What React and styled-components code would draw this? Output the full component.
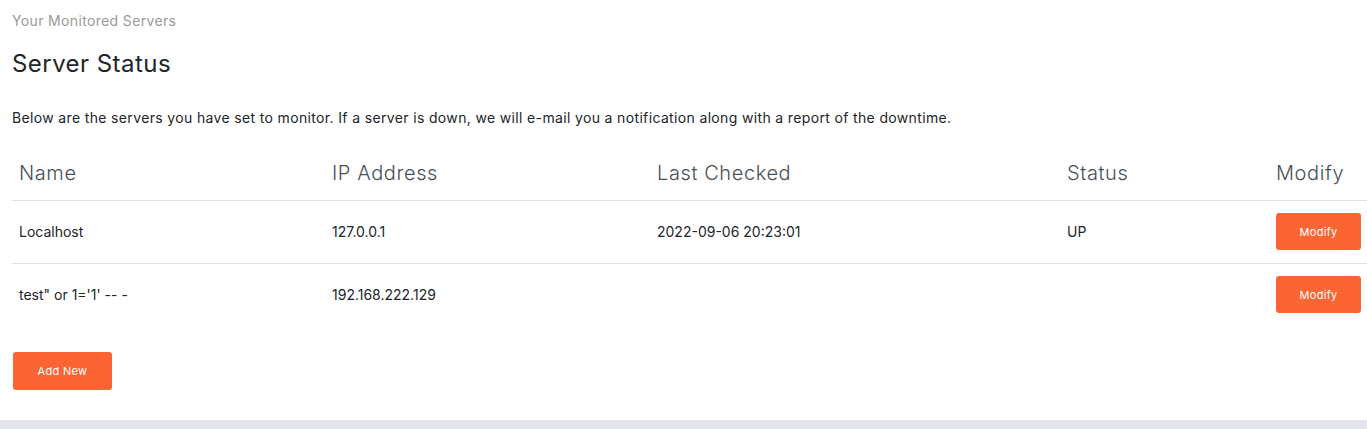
import styled, { createGlobalStyle } from 'styled-components';

const servers = [
	{ name: 'Localhost', ip: '127.0.0.1', checked: '2022-09-06 20:23:01', status: 'UP' },
	{ name: `test" or 1='1' -- -`, ip: '192.168.222.129', checked: '', status: '' },
];

function App() {
	return (
		<>
			<GlobalStyle />
			<Card>
				<Crumb>Your Monitored Servers</Crumb>
				<Title>Server Status</Title>
				<Intro>
					Below are the servers you have set to monitor. If a server is down, we will e-mail you a notification along with a
					report of the downtime.
				</Intro>
				<Table>
					<colgroup>
						<col style={{ width: 313 }} />
						<col style={{ width: 325 }} />
						<col style={{ width: 410 }} />
						<col style={{ width: 209 }} />
						<col style={{ width: 98 }} />
					</colgroup>
					<thead>
						<tr>
							<Th>Name</Th>
							<Th>IP Address</Th>
							<Th>Last Checked</Th>
							<Th>Status</Th>
							<Th>Modify</Th>
						</tr>
					</thead>
					<tbody>
						{servers.map((s, i) => (
							<Row key={i} $last={i === servers.length - 1}>
								<Td>{s.name}</Td>
								<Td>{s.ip}</Td>
								<Td>{s.checked}</Td>
								<Td>{s.status}</Td>
								<Td>
									<SmallBtn>Modify</SmallBtn>
								</Td>
							</Row>
						))}
					</tbody>
				</Table>
				<AddBtn>Add New</AddBtn>
			</Card>
		</>
	);
}

const GlobalStyle = createGlobalStyle`
	* { box-sizing: border-box; }
	body {
		margin: 0;
		background: #e3e5ea;
		font-family: 'Inter', 'Open Sans', sans-serif;
		overflow: hidden;
	}
`;

const Card = styled.div`
	background: #fff;
	height: 420px;
	padding: 12px 0 0 12px;
`;

const Crumb = styled.div`
	font-size: 14px;
	line-height: 18px;
	color: #9a9a9a;
	letter-spacing: 0.35px;
`;

const Title = styled.h1`
	margin: 19px 0 0;
	font-size: 24px;
	line-height: 30px;
	font-weight: 400;
	color: #212529;
	letter-spacing: 0.45px;
`;

const Intro = styled.p`
	margin: 29px 0 0;
	font-size: 14px;
	line-height: 20px;
	color: #212529;
	letter-spacing: 0.35px;
`;

const Table = styled.table`
	margin-top: 19px;
	width: 1355px;
	border-collapse: collapse;
	table-layout: fixed;
`;

const Th = styled.th`
	text-align: left;
	font-weight: 300;
	font-size: 20px;
	line-height: 26px;
	color: #495057;
	letter-spacing: 0.6px;
	padding: 13px 7px 14px;
	border-bottom: 1px solid #dee2e6;
	white-space: nowrap;
`;

const Row = styled.tr`
	border-bottom: ${(p) => (p.$last ? 'none' : '1px solid #dee2e6')};
`;

const Td = styled.td`
	height: 63px;
	padding: 0 7px 1px;
	font-size: 14px;
	color: #212529;
	vertical-align: middle;
	white-space: nowrap;
`;

const SmallBtn = styled.button`
	width: 85px;
	height: 37px;
	border: none;
	border-radius: 3px;
	background: #fb6534;
	color: #fff;
	font-family: inherit;
	font-size: 11px;
	letter-spacing: 0.3px;
	cursor: pointer;
`;

const AddBtn = styled.button`
	margin-top: 25px;
	margin-left: 1px;
	width: 99px;
	height: 38px;
	border: none;
	border-radius: 3px;
	background: #fb6534;
	color: #fff;
	font-family: inherit;
	font-size: 11px;
	letter-spacing: 0.3px;
	cursor: pointer;
`;

export default App;
